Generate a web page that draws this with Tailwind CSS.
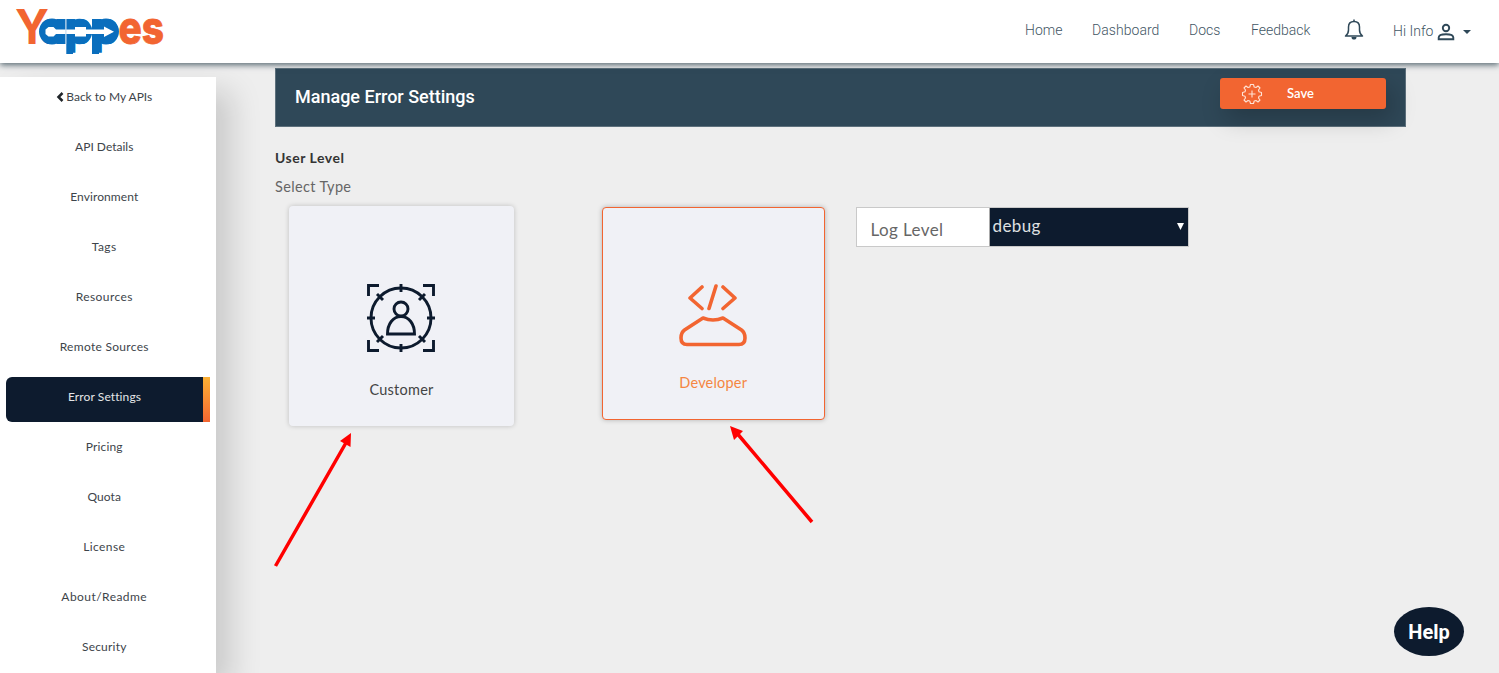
<!DOCTYPE html>
<html lang="en">
<head>
<meta charset="utf-8">
<title>Yappes - Manage Error Settings</title>
<script src="https://cdn.jsdelivr.net/npm/@tailwindcss/browser@4"></script>
</head>
<body class="relative h-[673px] w-[1499px] overflow-hidden bg-[#eeeeee] font-[Lato,sans-serif] text-[#4a4f54]">
<header class="relative z-10 flex h-[63px] items-start bg-white shadow-[0_2px_6px_rgba(38,60,72,0.75)]">
  <svg class="h-[63px] w-[180px]" viewBox="0 0 180 63" font-family="Inter, sans-serif" font-weight="800" style="font-feature-settings:'cv11'">
    <text x="15" y="44" font-size="48" fill="#f26531" textLength="34" lengthAdjust="spacingAndGlyphs" font-weight="700">Y</text>
    <text x="39" y="43.500" font-size="45" fill="#0a6ebd" textLength="80" lengthAdjust="spacingAndGlyphs">app</text>
    <text x="118.500" y="44" font-size="46" fill="#f26531" stroke="#f26531" stroke-width=".8" textLength="45.500" lengthAdjust="spacingAndGlyphs">es</text>
    <g fill="#0a6ebd"><circle cx="52" cy="31.500" r="13"/><path d="M58 19H65.500V44H58ZM66.300 19H73V54H66.300ZM92 19H99V54H92Z"/><circle cx="79.500" cy="31.500" r="12.800"/><circle cx="106" cy="31.500" r="13"/></g>
    <path d="M45.500 29.500 48.500 27H53.500L56 29.500H75V27H86V29.500H104V26.500L114 31.700 104 37V34H86V36.500H75V34H56L53.500 36.500H48.500L45.500 34Z" fill="#fff"/>
    <path d="M65.900 19V44" stroke="#a9cbe6" stroke-width=".8"/>
  </svg>
  <nav class="ml-auto flex h-[60px] items-center font-[Roboto,sans-serif] text-sm font-light text-[#3f5664]">
    <a class="w-[67px] tracking-[0.05px]">Home</a>
    <a class="w-[97px] tracking-[0.05px]">Dashboard</a>
    <a class="w-[62px]">Docs</a>
    <a class="w-[93px]">Feedback</a>
    <svg class="mr-[29px] h-[22px] w-[20px]" viewBox="0 0 20 22" fill="none" stroke="#2f4858" stroke-width="1.500"><path d="M1.500 17H18.500C16.500 15.500 15.500 14 15.500 11V8C15.500 4.500 13.500 2.500 10 2.500S4.500 4.500 4.500 8V11C4.500 14 3.500 15.500 1.500 17Z" stroke-linejoin="round"/><path d="M10 .5V3"/><path d="M7.500 18H12.500C12.500 20 11.500 20.500 10 20.500S7.500 20 7.500 18Z" fill="#2f4858" stroke="none"/></svg>
    <a class="mt-[2px] w-[44px] whitespace-nowrap">Hi Info</a>
    <svg class="mt-[3px] h-[18px] w-[18px]" viewBox="0 0 18 18" fill="none" stroke="#2f4858" stroke-width="1.900"><circle cx="9" cy="5" r="3.200"/><path d="M1.700 16.200V14.500C1.700 12.300 5.500 11.200 9 11.200S16.300 12.300 16.300 14.500V16.200Z"/></svg>
    <svg class="ml-[8px] mr-[28px] mt-[3px] h-[4px] w-[8px]" viewBox="0 0 8 4"><path d="M0 0H8L4 4Z" fill="#2f4858"/></svg>
  </nav>
</header>
<div class="flex">
  <aside class="mt-[14px] h-[596px] w-[215.500px] shrink-0 bg-white shadow-[16px_14px_28px_rgba(0,0,0,0.15)]">
    <ul class="flex flex-col text-center text-[12px] text-[#3d444a]">
      <li class="flex h-[50px] items-start justify-center pr-[7px] pt-[11px]"><svg class="mr-[2px] mt-[4px] h-[10px] w-[8px]" viewBox="0 0 8 10"><path d="M6.500 1 2.500 5 6.500 9" fill="none" stroke="#20252a" stroke-width="2.500"/></svg>Back to My APIs</li>
      <li class="h-[50px] pr-[7px] pt-[11px]">API Details</li>
      <li class="h-[50px] pr-[7px] pt-[11px] tracking-[0.1px]">Environment</li>
      <li class="h-[50px] pr-[7px] pt-[11px] tracking-[0.5px]">Tags</li>
      <li class="h-[50px] pr-[7px] pt-[11px] tracking-[0.4px]">Resources</li>
      <li class="h-[50px] pr-[7px] pt-[11px] tracking-[0.3px]">Remote Sources</li>
      <li class="h-[50px] pl-[6px]"><div class="flex h-[45px] w-[204px] overflow-hidden rounded-l-[6px] bg-[#0d1b2e] text-[#e4e6e8]"><span class="flex-1 pt-[11px] tracking-[0.1px]">Error Settings</span><i class="w-[7px] bg-linear-to-b from-[#fbb034] to-[#f26531]"></i></div></li>
      <li class="h-[50px] pr-[7px] pt-[11px] tracking-[0.15px]">Pricing</li>
      <li class="h-[50px] pr-[7px] pt-[11px] tracking-[0.1px]">Quota</li>
      <li class="h-[50px] pr-[7px] pt-[11px] tracking-[0.4px]">License</li>
      <li class="h-[50px] pr-[7px] pt-[11px] tracking-[0.45px]">About/Readme</li>
      <li class="h-[46px] pr-[7px] pt-[11px] tracking-[0.2px]">Security</li>
    </ul>
  </aside>
  <main class="ml-[59.500px] mt-[5px] w-[1131px]">
    <div class="flex h-[59px] items-start justify-between border border-[#5d707c] bg-[#2f4858] pl-[19px] pr-[19px]">
      <h1 class="pt-[14px] font-[Roboto,sans-serif] text-[18px] font-medium leading-[28px] text-white">Manage Error Settings</h1>
      <button class="mt-[9px] flex h-[31px] w-[166px] items-center rounded-[3px] bg-[#f26531] text-[13px] font-semibold text-white shadow-[6px_10px_24px_rgba(0,0,0,0.22)]">
        <svg class="ml-[21px] mt-[1px] h-[22px] w-[22px]" viewBox="-11 -11 22 22" fill="none" stroke="#ffe3d6" stroke-width="1.100" stroke-linejoin="round"><path d="M-1.500 -9.500H1.500L2.200 -7 4 -6.500 6 -8 8 -6 6.500 -4 7 -2.200 9.500 -1.500V1.500L7 2.200 6.500 4 8 6 6 8 4 6.500 2.200 7 1.500 9.500H-1.500L-2.200 7 -4 6.500 -6 8 -8 6 -6.500 4 -7 2.200 -9.500 1.500V-1.500L-7 -2.200 -6.500 -4 -8 -6 -6 -8 -4 -6.500 -2.200 -7Z"/><path d="M-3.500 0H3.500M0 -3.500V3.500"/></svg>
        <span class="ml-[24px]">Save</span>
      </button>
    </div>
    <h2 class="mt-[21px] text-[14px] font-bold leading-5 tracking-[0.5px] text-[#343434]">User Level</h2>
    <p class="mt-[9px] text-[14.500px] leading-5 tracking-[0.35px] text-[#666]">Select Type</p>
    <div class="mt-[9px] flex items-start pl-[14px]">
      <section class="flex h-[220px] w-[225px] flex-col items-center rounded-[4px] bg-[#f0f1f6] shadow-[0_0_5px_rgba(0,0,0,0.2)]">
        <svg class="mr-[1px] mt-[78px] h-[68px] w-[68px]" viewBox="0 0 68 68" fill="none" stroke="#0d1b2e" stroke-width="2.900"><circle cx="34" cy="34" r="30"/><path d="M1.500 12V1.500H12M56 1.500H66.500V12M66.500 56V66.500H56M12 66.500H1.500V56M34 0V8M34 60V68M0 34H8M60 34H68M10 10 16 16M58 10 52 16M10 58 16 52M58 58 52 52"/><circle cx="34" cy="25" r="7"/><path d="M20.500 50C20.500 40 26 32.500 34 32.500S47.500 40 47.500 50Z"/></svg>
        <span class="mt-[28px] text-[14.500px] leading-5 tracking-[0.25px] text-[#444]">Customer</span>
      </section>
      <section class="ml-[88px] mt-px flex h-[213px] w-[222.500px] flex-col items-center rounded-[4px] border border-[#f26531] bg-[#f0f1f6] shadow-[0_0_5px_rgba(0,0,0,0.25)]">
        <svg class="mt-[76px] h-[63px] w-[68px]" viewBox="0 0 68 63" fill="none" stroke="#f26531" stroke-width="3.600" stroke-linecap="round" stroke-linejoin="round"><path d="M23 3 11 14 23 24.500M44 3 56 14 44 24.500M37 2 30 24.500"/><path d="M24 34 5.500 46C2 48.500 2 51 2 54C2 58 4 60.500 8 60.500H60C64 60.500 66 58 66 54C66 51 66 48.500 62.500 46L44 34Q34 38 24 34Z"/></svg>
        <span class="mt-[26px] text-[14.500px] leading-5 tracking-[0.2px] text-[#f58642]">Developer</span>
      </section>
      <div class="ml-[31px] mt-px flex h-[40px] w-[333px] border border-[#c9c9c9] text-[17px] text-[#666]">
        <label class="w-[132px] bg-white pl-[14px] pt-[10px] leading-6 tracking-[0.4px]">Log Level</label>
        <div class="flex flex-1 items-start justify-between border-l border-[#aaa] bg-[#0d1b2e] pl-[3px] pr-[4px] pt-[6px] leading-6 tracking-[0.4px] text-[#dfe0e2]">debug<svg class="mt-[9px] h-[7px] w-[7px]" viewBox="0 0 7 7"><path d="M0 0H7L3.500 7Z" fill="#fff"/></svg></div>
      </div>
    </div>
  </main>
</div>
<svg class="pointer-events-none absolute left-0 top-0 z-20 h-[673px] w-[1499px]" viewBox="0 0 1499 673" stroke="#f00" stroke-width="3.500" fill="#f00"><path d="M275.500 566 347 441M812 522 736 432"/><path stroke="none" d="M351 433 350.500 447 340 441ZM730 426 743 431 734 440Z"/></svg>
<button class="absolute left-[1394px] top-[607px] z-20 h-[49px] w-[70px] rounded-[50%] bg-[#0d1b2e] font-[Roboto,sans-serif] text-[20px] font-bold text-white">Help</button>
</body>
</html>
